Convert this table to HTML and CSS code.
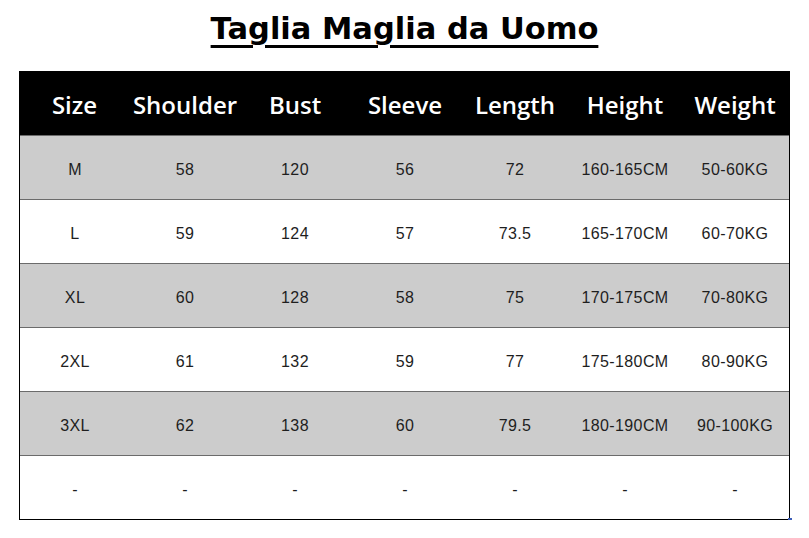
FILE: index.html
```html
<!DOCTYPE html>
<html>
<head>
<meta charset="utf-8">
<link rel="stylesheet" href="styles.css">
</head>
<body>
<h1 class="title">Taglia Maglia da Uomo</h1>
<div class="table">
  <div class="row head">
    <div>Size</div><div>Shoulder</div><div>Bust</div><div>Sleeve</div><div>Length</div><div>Height</div><div>Weight</div>
  </div>
  <div class="row grey">
    <div>M</div><div>58</div><div>120</div><div>56</div><div>72</div><div>160-165CM</div><div>50-60KG</div>
  </div>
  <div class="row">
    <div>L</div><div>59</div><div>124</div><div>57</div><div>73.5</div><div>165-170CM</div><div>60-70KG</div>
  </div>
  <div class="row grey">
    <div>XL</div><div>60</div><div>128</div><div>58</div><div>75</div><div>170-175CM</div><div>70-80KG</div>
  </div>
  <div class="row">
    <div>2XL</div><div>61</div><div>132</div><div>59</div><div>77</div><div>175-180CM</div><div>80-90KG</div>
  </div>
  <div class="row grey">
    <div>3XL</div><div>62</div><div>138</div><div>60</div><div>79.5</div><div>180-190CM</div><div>90-100KG</div>
  </div>
  <div class="row last">
    <div>-</div><div>-</div><div>-</div><div>-</div><div>-</div><div>-</div><div>-</div>
  </div>
  <span class="handle"></span>
</div>
</body>
</html>
```
FILE: styles.css
```css
html, body {
  margin: 0;
  padding: 0;
  background: #fff;
}
.title {
  margin: 0;
  height: 71px;
  box-sizing: border-box;
  padding-top: 9px;
  text-align: center;
  font-family: "DejaVu Sans", sans-serif;
  font-weight: bold;
  font-size: 30.5px;
  line-height: 40px;
  color: #000;
  text-decoration: underline;
  text-decoration-thickness: 3px;
  text-underline-offset: 6px;
}
.table {
  position: relative;
  margin-left: 19px;
  width: 771px;
  box-sizing: border-box;
  border: 1px solid #000;
  border-top: none;
}
.row {
  display: grid;
  grid-template-columns: repeat(7, 110px);
  height: 64px;
  border-top: 1px solid #6b6b6b;
  box-sizing: border-box;
  font-family: "Liberation Sans", Arial, sans-serif;
  font-size: 16px;
  letter-spacing: 0.4px;
  color: #1e1e1e;
}
.row > div {
  display: flex;
  align-items: center;
  justify-content: center;
  padding-top: 4px;
}
.row.head {
  background: #000;
  color: #fff;
  border-top: none;
  font-family: "Open Sans", sans-serif;
  font-weight: 600;
  font-size: 24px;
  letter-spacing: 0;
  margin-left: -1px;
  margin-right: -1px;
  grid-template-columns: 111px repeat(6, 110px);
  width: 771px;
}
.row.head > div {
  padding-top: 3px;
}
.row.grey {
  background: #cccccc;
}
.handle {
  position: absolute;
  right: -3px;
  bottom: -3px;
  width: 4px;
  height: 4px;
  background: #3d5fb8;
}
```
